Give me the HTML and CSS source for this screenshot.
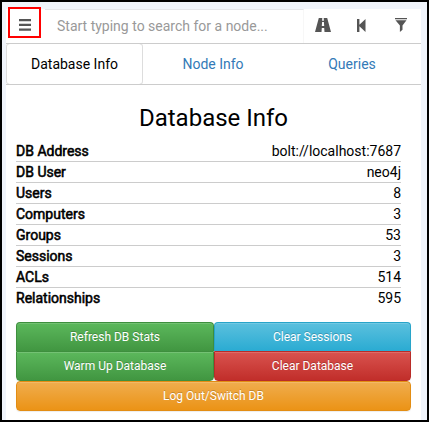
FILE: index.html
```html
<!DOCTYPE html>
<html lang="en">
<head>
<meta charset="utf-8">
<title>Database Info</title>
<link rel="stylesheet" href="styles.css">
</head>
<body>
<div class="window">
  <main class="panel">
    <header class="search">
      <button class="menu" aria-label="Menu"><svg width="12" height="12" viewBox="0 0 12 12"><path d="M0 0h12v2.3H0zM0 4.7h12V7H0zM0 9.4h12v2.3H0z"/></svg></button>
      <div class="field">Start typing to search for a node...</div>
      <div class="tools">
        <svg width="16" height="14" viewBox="0 0 16 14"><path fill-rule="evenodd" d="M3.8 0H7.3L7.1 2.8h1.8L8.7 0h3.5L16 14H9.5l-.3-4H6.8l-.3 4H0zM7.1 4.1L6.8 8h2.4L8.9 4.1z"/></svg>
        <svg width="9" height="13" viewBox="0 0 9 13"><path d="M0 0h2.4v5.7L8.5 0v13L2.4 7.3V13H0z"/></svg>
        <svg width="12" height="14" viewBox="0 0 12 14"><path d="M0 0h12v1.3H0zM.5 2.2h11L7.5 7.5v4.2L4.9 14V7.5z"/></svg>
      </div>
    </header>
    <nav class="tabs">
      <a class="tab active">Database Info</a>
      <a class="tab">Node Info</a>
      <a class="tab">Queries</a>
    </nav>
    <section class="content">
      <h1>Database Info</h1>
      <dl>
        <div><dt>DB Address</dt><dd>bolt://localhost:7687</dd></div>
        <div><dt>DB User</dt><dd>neo4j</dd></div>
        <div><dt>Users</dt><dd>8</dd></div>
        <div><dt>Computers</dt><dd>3</dd></div>
        <div><dt>Groups</dt><dd>53</dd></div>
        <div><dt>Sessions</dt><dd>3</dd></div>
        <div><dt>ACLs</dt><dd>514</dd></div>
        <div><dt>Relationships</dt><dd>595</dd></div>
      </dl>
      <div class="buttons">
        <button class="btn green">Refresh DB Stats</button>
        <button class="btn blue">Clear Sessions</button>
        <button class="btn green">Warm Up Database</button>
        <button class="btn red">Clear Database</button>
        <button class="btn orange">Log Out/Switch DB</button>
      </div>
    </section>
  </main>
</div>
</body>
</html>
```
FILE: styles.css
```css
* { box-sizing: border-box; }
body { margin: 0; font: 14px/20px Roboto, "Liberation Sans", sans-serif; color: #000; }
button { font: inherit; margin: 0; }
.window { width: 429px; height: 422px; border: 2px solid #000; background: #f0f4fb; padding: 7px 6px 0 4px; overflow: hidden; }
.panel { height: 411px; background: #fff; }
.search { display: flex; height: 34px; }
.menu { flex: none; width: 33px; height: 31px; margin: -2px 0 0 2px; padding: 4px 0 0 0; border: 2px solid #f00; background: #fff; display: flex; align-items: center; justify-content: center; }
svg { fill: #555; display: block; flex: none; }
.field { flex: none; width: 259px; margin-left: 4px; padding: 6px 0 0 12px; border-top: 1px solid #e4e6ea; border-right: 1px solid #f7f7f7; color: #999; white-space: nowrap; }
.tools { display: flex; align-items: center; padding: 0 0 2px 11px; }
.tools svg:nth-child(2) { margin-left: 26px; }
.tools svg:nth-child(3) { margin-left: 29px; }
.tabs { display: flex; height: 42px; border-top: 1px solid #ccc; border-bottom: 1px solid #ccc; }
.tab { flex: 1; text-align: center; line-height: 41px; color: #337ab7; margin-left: 1px; }
.tab.active { flex: none; width: 137px; margin: -1px 0; border: 1px solid #ddd; border-top-color: #ccc; border-bottom-color: #ccc; border-radius: 4px; color: #000; line-height: 41px; }
.content { padding: 18px 10px 0; }
h1 { margin: 0 0 8px; font-size: 24px; line-height: 30px; font-weight: 400; text-align: center; }
dl { margin: 0 10px 14px 0; }
dl div { display: flex; justify-content: space-between; height: 21px; border-bottom: 1px solid #ccc; }
dl div:last-child { border-bottom: 0; height: 20px; }
dt { -webkit-text-stroke: .55px #000; }
dd { margin: 0; }
.buttons { display: grid; grid-template-columns: 198px 197px; grid-template-rows: 29px 30px 30px; margin-top: 14px; }
.btn { padding: 0; border: 1px solid; border-radius: 4px; color: #fff; font-size: 12px; line-height: 18px; text-shadow: 0 -1px 0 rgba(0,0,0,.2); box-shadow: inset 0 1px 0 rgba(255,255,255,.15), 0 1px 1px rgba(0,0,0,.075); }
.btn:nth-child(-n+2) { border-bottom-width: 0; border-radius: 4px 4px 0 0; padding-bottom: 1px; }
.btn:nth-child(3), .btn:nth-child(4) { border-radius: 0 0 4px 4px; }
.green { background: linear-gradient(#5cb85c, #419641); border-color: #3e8f3e; }
.blue { background: linear-gradient(#5bc0de, #2aabd2); border-color: #28a4c9; }
.red { background: linear-gradient(#d9534f, #c12e2a); border-color: #b92c28; }
.orange { grid-column: 1 / 3; background: linear-gradient(#f0ad4e, #eb9316); border-color: #e38d13; }
```
